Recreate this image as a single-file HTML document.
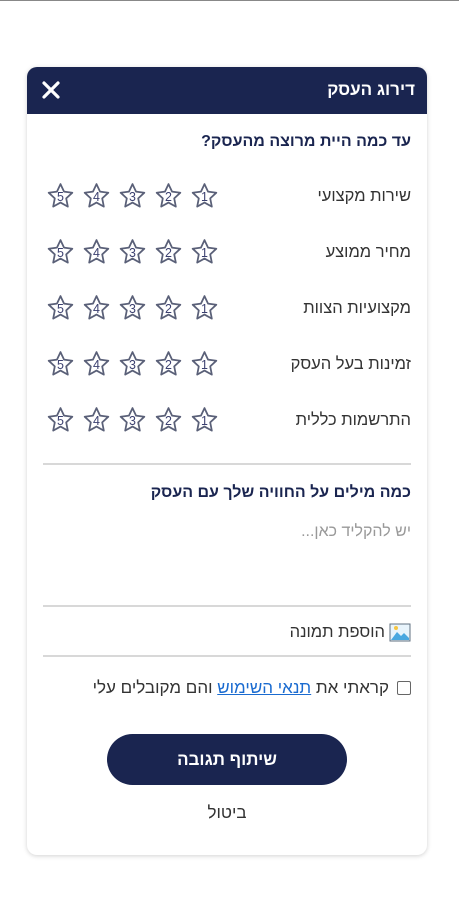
<!DOCTYPE html>
<html><head><meta charset="utf-8"><style>
*{margin:0;padding:0;box-sizing:border-box}
body{width:459px;height:917px;background:#fff;position:relative;font-family:"Liberation Sans","Noto Sans CJK SC",sans-serif;overflow:hidden}
.top{position:absolute;left:0;top:0;width:459px;height:1px;background:#888}
.card{position:absolute;left:27px;top:67px;width:400px;height:788px;border-radius:10px;background:#fff;box-shadow:0 1px 5px rgba(0,0,0,.18);overflow:hidden}
.hdr{position:absolute;left:0;top:0;width:400px;height:47px;background:#1a2550}
.hdr .t{position:absolute;right:12px;top:13px;color:#fff;font-weight:bold;font-size:17px;direction:rtl}
.hdr .x{position:absolute;left:14px;top:13px}
.abs{position:absolute;direction:rtl;white-space:nowrap}
.q{right:16px;color:#1a2550;font-weight:bold;font-size:16px}
.lbl{right:16px;color:#333;font-size:16.5px}
.line{position:absolute;left:16px;width:368px;height:2px;background:#d8d8d8}
.stars{position:absolute;left:20px;display:flex;gap:9px}
.btn{position:absolute;left:80px;top:667px;width:240px;height:51px;border-radius:26px;background:#1a2550;color:#fff;font-weight:bold;font-size:17px;text-align:center;line-height:51px;direction:rtl}
</style></head><body>
<div class="top"></div>
<div class="card">
 <div class="hdr"><div class="t">דירוג העסק</div>
  <svg class="x" width="20" height="20" viewBox="0 0 20 20"><path d="M3 3L17 17M17 3L3 17" stroke="#fff" stroke-width="3.2" stroke-linecap="round"/></svg></div>
 <div class="abs q" style="top:66px">עד כמה היית מרוצה מהעסק?</div>

 <div class="abs lbl" style="top:120px">שירות מקצועי</div>
 <div class="abs lbl" style="top:176px">מחיר ממוצע</div>
 <div class="abs lbl" style="top:232px">מקצועיות הצוות</div>
 <div class="abs lbl" style="top:288px">זמינות בעל העסק</div>
 <div class="abs lbl" style="top:344px">התרשמות כללית</div>

 <div id="s"></div>

 <div class="line" style="top:396px"></div>
 <div class="abs q" style="top:417px">כמה מילים על החוויה שלך עם העסק</div>
 <div class="abs" style="right:16px;top:456px;color:#999;font-size:16px">יש להקליד כאן...</div>
 <div class="line" style="top:538px"></div>
 <div class="abs" style="right:16px;top:556px;color:#333;font-size:16.5px;display:flex;align-items:center;gap:4px">
  <svg width="22" height="19" viewBox="0 0 22 19"><rect x="1" y="1" width="20" height="17" fill="#e8f4fc" stroke="#607080" stroke-width="1"/><path d="M2 17L8 9L12 13L15 10L20 15L20 17Z" fill="#4aa8e0"/><circle cx="7" cy="5" r="2" fill="#f5c542"/></svg>
  <span>הוספת תמונה</span></div>
 <div class="line" style="top:588px"></div>
 <div class="abs" style="right:16px;top:611px;color:#333;font-size:17px;display:flex;align-items:center;gap:8px">
  <span style="width:14px;height:14px;border:1.5px solid #666;border-radius:2px;display:inline-block"></span>
  <span>קראתי את <u style="color:#1a6bd0">תנאי השימוש</u> והם מקובלים עלי</span></div>
 <div class="btn">שיתוף תגובה</div>
 <div class="abs" style="left:0;width:400px;text-align:center;top:736px;color:#333;font-size:17px">ביטול</div>
</div>
<script>
var rows=[115,171,227,283,339],h='';
rows.forEach(function(t){h+='<div class="stars" style="top:'+t+'px">';for(var n=5;n>=1;n--){h+='<svg width="27" height="27" viewBox="0 0 26 26"><polygon points="13,2 16.4,9.3 24.4,10.3 18.5,15.8 20.05,23.7 13,19.8 5.95,23.7 7.5,15.8 1.6,10.3 9.6,9.3" fill="none" stroke="#5a6078" stroke-width="1.7" stroke-linejoin="round"/><text x="13" y="18.5" text-anchor="middle" font-size="12" font-family="Liberation Sans" fill="#3b4070">'+n+'</text></svg>';}h+='</div>';});
document.getElementById('s').outerHTML=h;
</script>
</body></html>
